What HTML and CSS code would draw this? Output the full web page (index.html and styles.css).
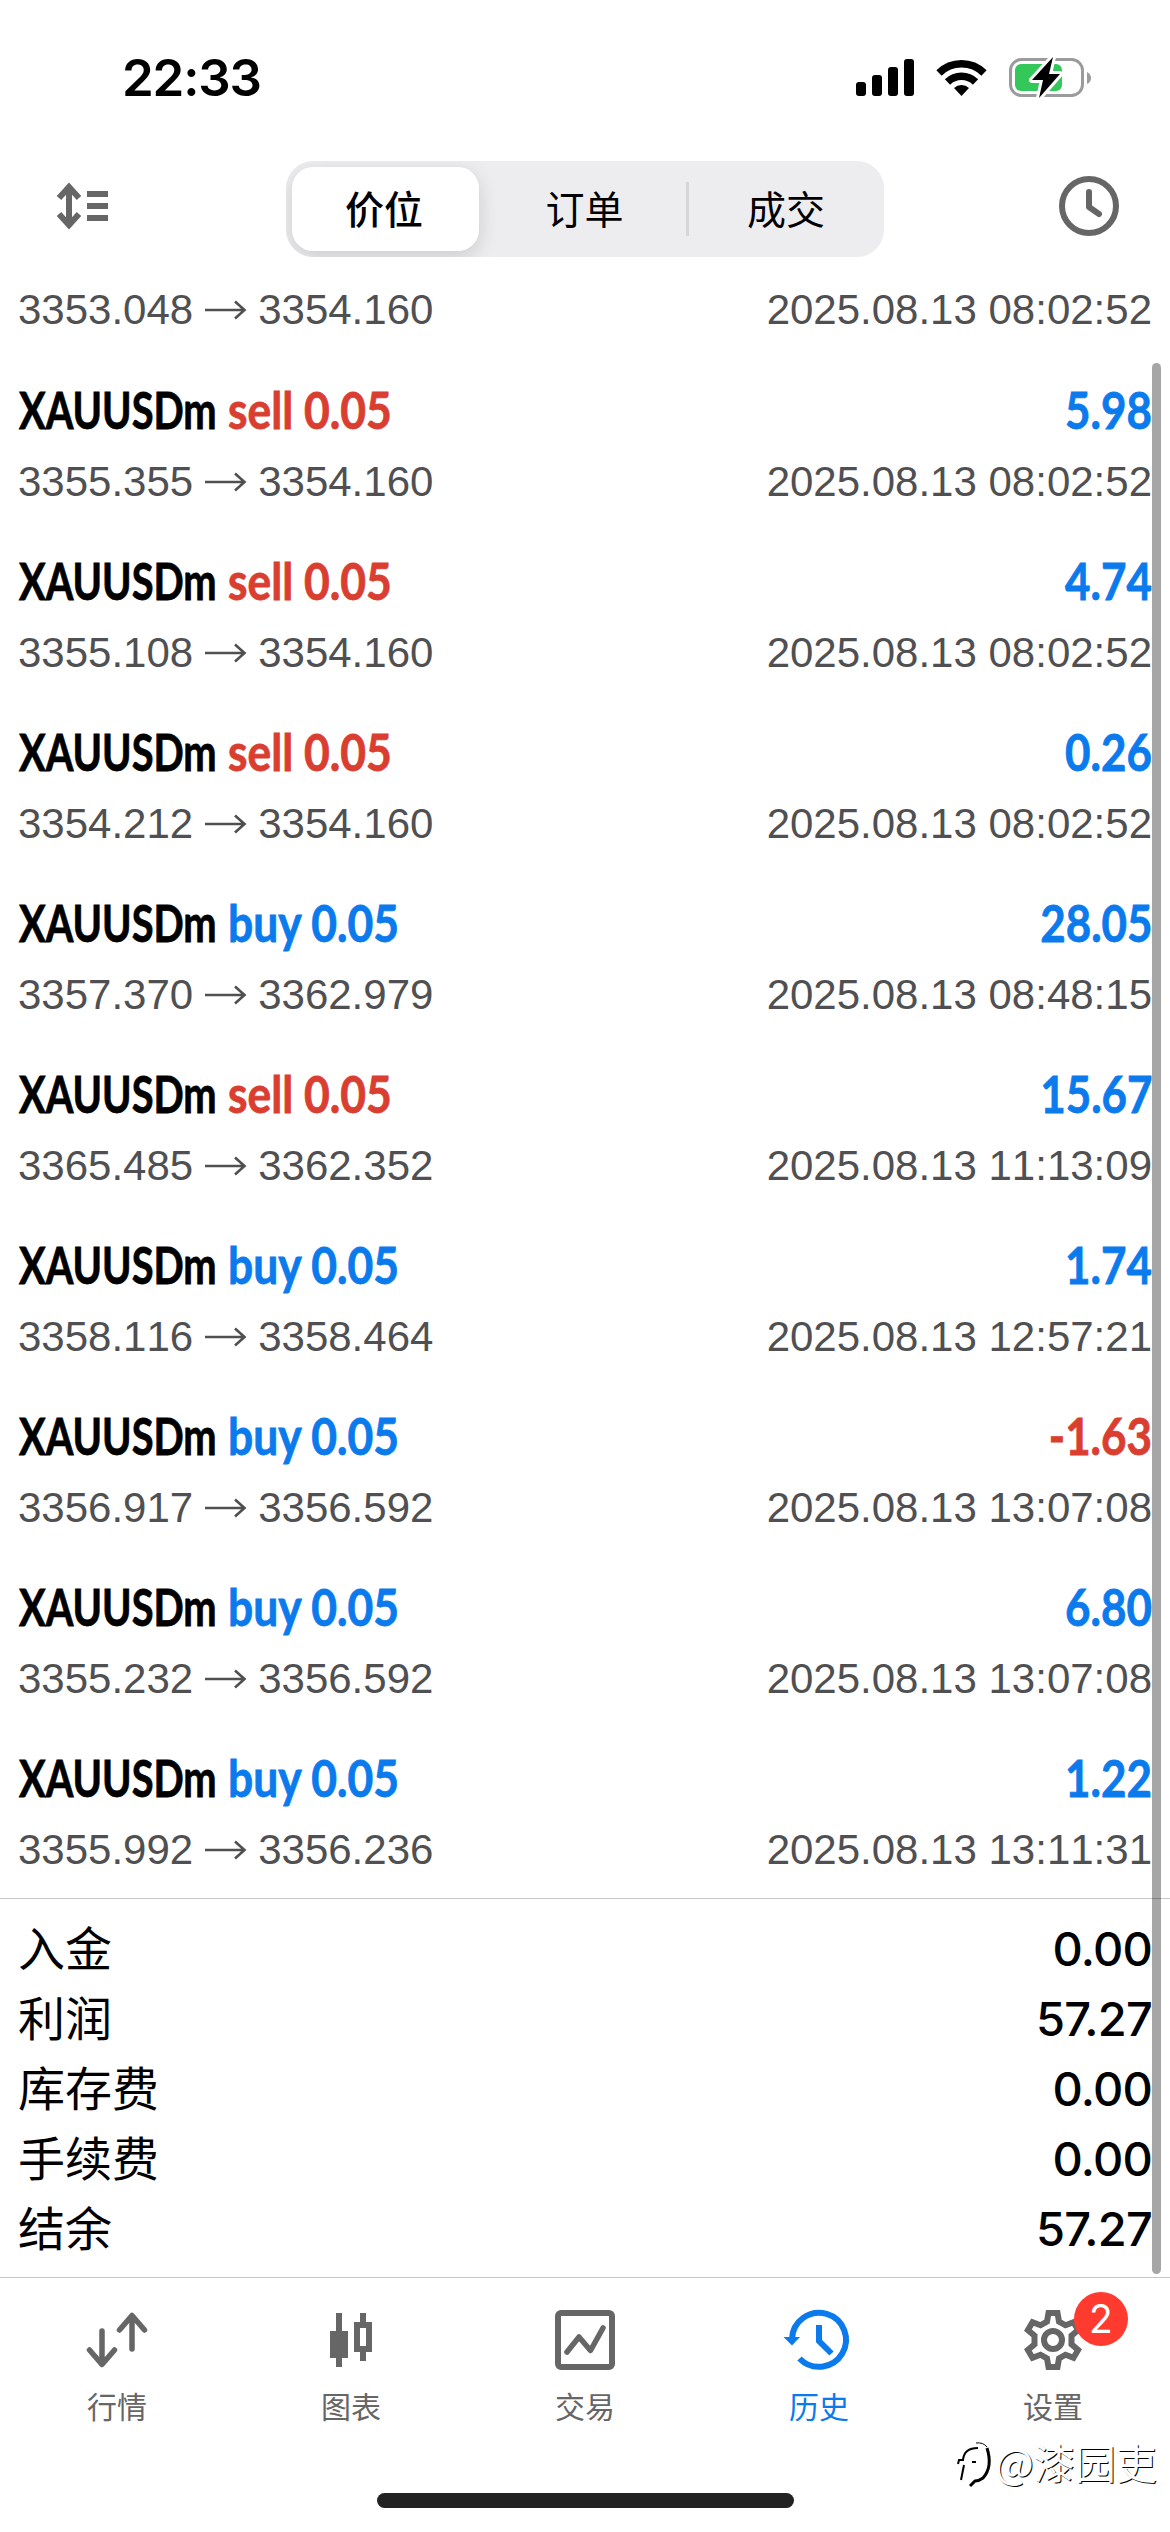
FILE: index.html
```html
<!DOCTYPE html>
<html lang="zh-CN">
<head>
<meta charset="utf-8">
<title>历史</title>
<link rel="stylesheet" href="styles.css">
</head>
<body>
<header class="status">
  <div class="time">22:33</div>
  <svg class="status-icons" width="240" height="50" viewBox="850 52 240 50">
    <g fill="#000">
      <rect x="856" y="82" width="10" height="14" rx="3"/>
      <rect x="872" y="75" width="10" height="21" rx="3"/>
      <rect x="888" y="67" width="10" height="29" rx="3"/>
      <rect x="904" y="59" width="10" height="37" rx="3"/>
      <path d="M961.500 96l-7.500-8a11 11 0 0 1 15 0z"/>
    </g>
    <g fill="none" stroke="#000" stroke-width="7.500">
      <path d="M939 73a32 32 0 0 1 45 0"/>
      <path d="M947.500 82a20 20 0 0 1 28 0"/>
    </g>
    <rect x="1010.500" y="59.500" width="72" height="36" rx="11" fill="none" stroke="#9b9b9e" stroke-width="3"/>
    <path d="M1087 72v12q4-2 4-6t-4-6z" fill="#9b9b9e"/>
    <rect x="1015" y="64" width="47" height="27" rx="6" fill="#34c759"/>
    <path d="M1053 57l-21 23h11l-4 18 21-24h-11z" fill="#000" stroke="#fff" stroke-width="6" paint-order="stroke" stroke-linejoin="round"/>
  </svg>
</header>

<nav class="toolbar">
  <svg class="sort-icon" width="52" height="50" viewBox="57 181 52 50" fill="none" stroke="#666" stroke-width="6">
    <path d="M69 187v38M59 198l10-11 10 11M59 214l10 11 10-11M87 194h21M87 206h21M87 218h21"/>
  </svg>
  <div class="segments">
    <div class="segment active">价位</div>
    <div class="segment">订单</div>
    <div class="segment last">成交</div>
  </div>
  <svg class="clock-icon" width="62" height="62" viewBox="0 0 62 62" fill="none" stroke="#666" stroke-width="6" stroke-linecap="round" stroke-linejoin="round">
    <circle cx="31" cy="31" r="27"/><path d="M31 17v15l10 7"/>
  </svg>
</nav>

<main class="history">
  <div class="deals" id="deals"></div>
  <section class="summary">
    <div class="total"><span>入金</span><b>0.00</b></div>
    <div class="total"><span>利润</span><b>57.27</b></div>
    <div class="total"><span>库存费</span><b>0.00</b></div>
    <div class="total"><span>手续费</span><b>0.00</b></div>
    <div class="total"><span>结余</span><b>57.27</b></div>
  </section>
  <div class="scrollbar"></div>
</main>

<footer class="tabs">
  <div class="tab">
    <svg width="64" height="64" viewBox="85 2308 64 64" fill="none" stroke="#666" stroke-width="5.500" stroke-linecap="round" stroke-linejoin="round"><path d="M102 2331v33M89.500 2350l12.500 14.500 12.500-14.500M132 2349v-33M119.500 2330l12.500-14.500 12.500 14.500"/></svg>
    <span>行情</span>
  </div>
  <div class="tab">
    <svg width="64" height="64" viewBox="319 2308 64 64" fill="#666"><path d="M336 2313h6v18h6v27h-6v9h-6v-9h-6v-27h6z"/><path fill-rule="evenodd" d="M360 2313h6v9h6v30h-6v9h-6v-9h-6v-30h6zM360 2328v18h6v-18z"/></svg>
    <span>图表</span>
  </div>
  <div class="tab">
    <svg width="64" height="64" viewBox="553 2308 64 64" fill="none" stroke="#666" stroke-width="6" stroke-linecap="round" stroke-linejoin="round"><rect x="558" y="2313" width="54" height="54" rx="3"/><path stroke-width="5.500" d="M567 2352l12-15 11.500 13.500L603 2328"/></svg>
    <span>交易</span>
  </div>
  <div class="tab selected">
    <svg width="72" height="64" viewBox="783 2308 72 64" fill="none" stroke="#0a7aec" stroke-width="6"><path d="M792 2339a27 27 0 1 1 7.500 19.500M819 2325v16l12.500 12.500"/><path d="M783.500 2337h16.500l-8 8.500z" fill="#0a7aec" stroke="none"/></svg>
    <span>历史</span>
  </div>
  <div class="tab">
    <svg width="64" height="64" viewBox="-32 -32 64 64" fill="none" stroke="#666" stroke-width="6"><path d="M-4.500-27h9l1.500 8.500 6.500 3.800 8-3 4.600 7.800-6.600 5.600v8.600l6.600 5.600-4.600 7.800-8-3-6.500 3.800L4.500 27h-9l-1.500-8.500-6.500-3.800-8 3-4.600-7.800 6.600-5.600v-8.600l-6.600-5.600 4.600-7.800 8 3 6.500-3.800z"/><circle r="9"/></svg>
    <span>设置</span>
    <i class="badge">2</i>
  </div>
</footer>
<div class="home-indicator"></div>
<div class="watermark">
  <svg width="36" height="46" viewBox="956 2444 36 46" fill="none" stroke="#000" stroke-width="2"><path d="M961 2486l3-15M958 2470l1-4h4q1-12 15-12M972 2468h4"/><path stroke-width="1" d="M976 2449q7-1 11 4"/><path stroke-width="3" d="M987 2454q6 19-4 30-4 3-8 3l-5 5"/></svg>
  <span>@漆园吏</span>
</div>
<script src="deals.js"></script>
</body>
</html>
```
FILE: deals.js
```js
const deals = [
  ["sell", "", "3353.048", "3354.160", "08:02:52"],
  ["sell", "5.98", "3355.355", "3354.160", "08:02:52"],
  ["sell", "4.74", "3355.108", "3354.160", "08:02:52"],
  ["sell", "0.26", "3354.212", "3354.160", "08:02:52"],
  ["buy", "28.05", "3357.370", "3362.979", "08:48:15"],
  ["sell", "15.67", "3365.485", "3362.352", "11:13:09"],
  ["buy", "1.74", "3358.116", "3358.464", "12:57:21"],
  ["buy", "-1.63", "3356.917", "3356.592", "13:07:08"],
  ["buy", "6.80", "3355.232", "3356.592", "13:07:08"],
  ["buy", "1.22", "3355.992", "3356.236", "13:11:31"]
];

const arrow = '<svg class="arrow" width="41" height="20" viewBox="0 0 41 20"><path d="M0 10H40M30 1.500 39.500 10 30 18.500"/></svg>';

document.getElementById("deals").innerHTML = deals.map(([side, profit, open, close, time], i) => `
  <article class="deal">
    ${i === 0 ? "" : `<div class="headline">
      <span class="symbol">XAUUSDm</span><span class="side ${side}">${side} 0.05</span>
      <span class="profit ${profit < 0 ? "loss" : ""}">${profit}</span>
    </div>`}
    <div class="detail"><span>${open}</span>${arrow}<span>${close}</span><time>2025.08.13 ${time}</time></div>
  </article>`).join("");
```
FILE: styles.css
```css
* { box-sizing: border-box; }
body {
  margin: 0;
  width: 1170px;
  height: 2532px;
  display: flex;
  flex-direction: column;
  position: relative;
  overflow: hidden;
  background: #fff;
  color: #000;
  font-family: Inter, "Noto Sans CJK SC", sans-serif;
}
svg { display: block; overflow: visible; flex: none; }

.status {
  height: 152px;
  flex: none;
  padding: 52px 80px 0 122px;
  display: flex;
  justify-content: space-between;
}
.time { font-size: 51px; line-height: 52px; font-weight: 600; letter-spacing: -1.2px; }

.toolbar {
  height: 118px;
  flex: none;
  padding: 9px 50px 0 57px;
  display: flex;
  justify-content: space-between;
  align-items: flex-start;
}
.sort-icon { margin-top: 20px; }
.clock-icon { margin-top: 14px; }
.segments {
  width: 598px;
  height: 96px;
  margin-left: 3px;
  padding: 6px;
  display: flex;
  border-radius: 27px;
  background: #ededef;
  overflow: hidden;
}
.segment {
  width: 207px;
  flex: none;
  padding: 1px 0 0 4px;
  display: flex;
  align-items: center;
  justify-content: center;
  font-size: 39px;
  line-height: 54px;
}
.segment.active {
  width: 187px;
  padding: 1px 3px 0 0;
  border-radius: 21px;
  background: #fff;
  box-shadow: 0 6px 20px rgba(0, 0, 0, .14);
  font-weight: 500;
}
.segment + .segment { margin: 15px 0; }
.segment.last { width: 192px; padding-left: 5px; border-left: 3px solid #d6d6d9; }

.history { height: 2008px; flex: none; position: relative; }
.deals { height: 1628px; }
.deal { height: 171px; padding: 0 18px 0 18px; }
.deal:first-child { height: 78px; }
.headline { height: 94px; display: flex; align-items: flex-end; }
.headline span {
  font: 700 51px/64px Lato, sans-serif;
  -webkit-text-stroke: .8px currentColor;
  white-space: pre;
}
.symbol, .side { transform-origin: 0 50%; }
.headline .symbol { width: 210px; transform: translateX(1px) scaleX(.78); }
.side { transform: scaleX(.87); }
.sell { color: #d93e31; }
.buy { color: #0a7aec; }
.headline .profit { margin-left: auto; color: #0a7aec; transform: scaleX(.86); transform-origin: 100% 50%; }
.headline .loss { color: #d93e31; }
.detail {
  height: 77px;
  padding-top: 3px;
  display: flex;
  align-items: center;
  font: 42px/60px "Liberation Sans", Arial, sans-serif;
  font-kerning: none;
  color: #505052;
}
.arrow { margin: 0 12px; fill: none; stroke: #505052; stroke-width: 2.600; }
.detail time { margin-left: auto; }

.summary {
  height: 380px;
  padding: 14px 18px 0 18px;
  border-top: 1px solid #c6c6c8;
}
.total { height: 70px; display: flex; justify-content: space-between; align-items: center; }
.total span { font-size: 47px; line-height: 66px; padding-bottom: 4px; font-family: "Noto Sans CJK SC", sans-serif; }
.total b { font-size: 47px; font-weight: 500; letter-spacing: -.8px; }
.scrollbar {
  position: absolute;
  left: 1152px;
  top: 93px;
  width: 9px;
  height: 1911px;
  border-radius: 5px;
  background: rgba(0, 0, 0, .35);
}

.tabs { height: 160px; flex: none; display: flex; border-top: 1px solid #c6c6c8; margin-top: -1px; }
.tab {
  width: 234px;
  padding-top: 30px;
  display: flex;
  flex-direction: column;
  align-items: center;
  position: relative;
  color: #666;
  font-size: 30px;
  line-height: 36px;
}
.tab span { margin-top: 17px; }
.selected { color: #0a7aec; }
.badge {
  position: absolute;
  left: 138px;
  top: 14px;
  width: 54px;
  height: 54px;
  border-radius: 50%;
  background: #ff3b30;
  color: #fff;
  font: 39px/54px Inter, sans-serif;
  text-align: center;
}
.home-indicator { width: 417px; height: 15px; margin: 56px auto 0; border-radius: 8px; background: #222; flex: none; }
.watermark {
  position: absolute;
  left: 956px;
  top: 2432px;
  display: flex;
  align-items: center;
  color: #fff;
  font: 41px/58px "Noto Sans CJK SC", sans-serif;
  text-shadow: 1px 1px 0 #000;
}
.watermark span { margin-left: 3px; }
```
